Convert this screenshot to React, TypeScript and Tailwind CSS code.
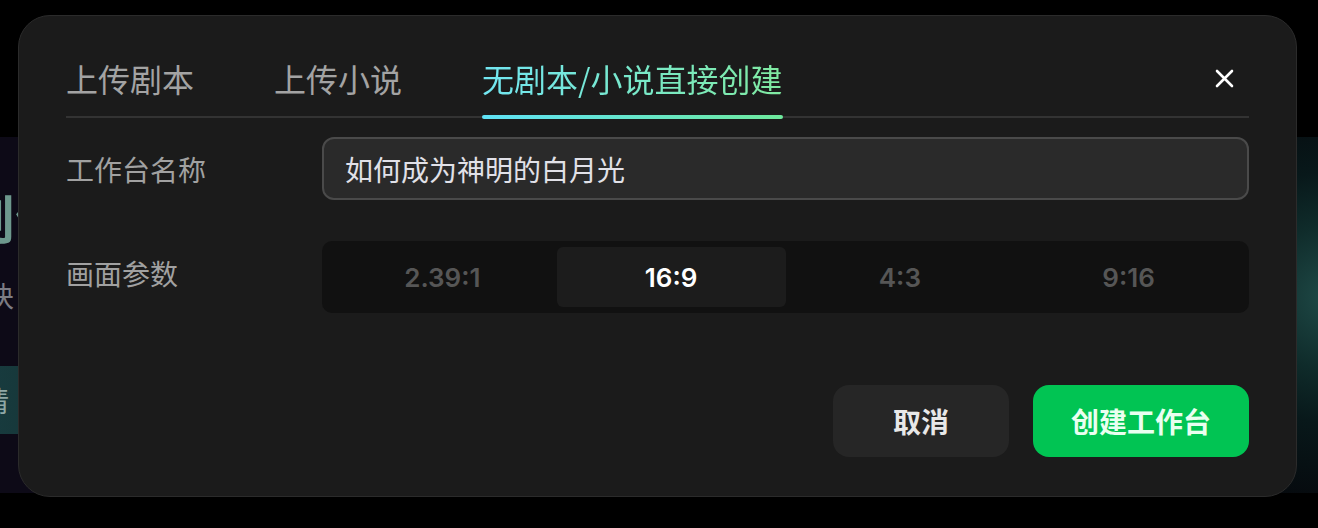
import { useState } from "react";

const tabs = ["上传剧本", "上传小说", "无剧本/小说直接创建"];
const ratios = ["2.39:1", "16:9", "4:3", "9:16"];

export default function App() {
  const [tab, setTab] = useState(2);
  const [ratio, setRatio] = useState(1);
  const [name, setName] = useState("如何成为神明的白月光");

  return (
    <div className="relative h-[528px] w-[1318px] overflow-hidden bg-black font-['Noto_Sans_CJK_SC','Noto_Sans',sans-serif]">
      {/* page behind the dialog */}
      <div className="mt-[137px] flex h-[356px] bg-[#0d0a17]">
        <div className="flex w-[120px] flex-col">
          <div className="-ml-[37px] mt-[50px] text-[52px] font-bold leading-[60px] text-[#6d988d]">创作</div>
          <div className="-ml-[14px] mt-[32px] text-[28px] leading-[32px] text-[#7c7c84]">块</div>
          <div className="-ml-[20px] mt-[55px] flex h-[68px] w-[140px] items-center bg-linear-to-r from-[#183c40] to-[#14302f] pl-[20px] text-[28px] text-[#8fa8a6]">
            <span className="-ml-[19px]">请</span>
          </div>
        </div>
        <div className="ml-auto w-[60px] bg-[radial-gradient(circle_at_120%_45%,#1f4a47_0%,#0f2b2a_35%,#08181a_60%,#06090d_100%)]" />
      </div>

      {/* dialog */}
      <div className="absolute left-[18px] top-[15px] h-[482px] w-[1279px] rounded-[32px] border border-[#2b2b2b] bg-[#1b1b1b] px-[47px]">
        <div className="flex items-start border-b-2 border-[#333333] pt-[42px]">
          <div className="flex gap-[80px]">
            {tabs.map((t, i) => (
              <button key={t} onClick={() => setTab(i)} className="flex flex-col items-stretch">
                <span
                  className={
                    i === tab
                      ? "bg-linear-to-r from-[#72e6f2] to-[#80eaa0] bg-clip-text text-[32px] leading-[40px] text-transparent"
                      : "text-[32px] leading-[40px] text-[#a3a3a3]"
                  }
                >
                  {t}
                </span>
                <span
                  className={
                    i === tab
                      ? "-mb-[3px] mt-[17px] h-[4px] rounded-full bg-linear-to-r from-[#5fe2f6] to-[#6ee99c]"
                      : "-mb-[3px] mt-[17px] h-[4px]"
                  }
                />
              </button>
            ))}
          </div>
          <button className="ml-auto mr-[9px] flex h-[40px] w-[32px] items-center justify-center">
            <svg width="19" height="19" viewBox="0 0 19 19" fill="none" stroke="#ffffff" strokeWidth="2.6" strokeLinecap="round">
              <path d="M2 2L17 17M17 2L2 17" />
            </svg>
          </button>
        </div>

        <div className="mt-[19px] flex items-center">
          <div className="w-[256px] text-[28px] leading-[36px] text-[#a1a1a1]">工作台名称</div>
          <input
            value={name}
            onChange={(e) => setName(e.target.value)}
            className="h-[63px] flex-1 rounded-[12px] border-2 border-[#4a4a4a] bg-[#2a2a2a] px-[21px] text-[28px] text-[#e1e1e8] outline-none"
          />
        </div>

        <div className="mt-[41px] flex items-center">
          <div className="mb-[8px] w-[256px] text-[28px] leading-[36px] text-[#a1a1a1]">画面参数</div>
          <div className="grid h-[72px] flex-1 grid-cols-4 rounded-[10px] bg-[#111111] p-[6px]">
            {ratios.map((r, i) => (
              <button
                key={r}
                onClick={() => setRatio(i)}
                className={
                  i === ratio
                    ? "rounded-[6px] bg-[#1c1c1c] font-['Inter',sans-serif] text-[26px] font-semibold text-white"
                    : "rounded-[6px] font-['Inter',sans-serif] text-[26px] font-semibold text-[#565656]"
                }
              >
                {r}
              </button>
            ))}
          </div>
        </div>

        <div className="mt-[72px] flex justify-end gap-[24px]">
          <button className="h-[72px] w-[176px] rounded-[16px] bg-[#262626] text-[28px] font-bold text-[#e8e8e8]">取消</button>
          <button className="h-[72px] w-[216px] rounded-[16px] bg-[#01c453] text-[28px] font-bold text-[#e9fff0]">创建工作台</button>
        </div>
      </div>
    </div>
  );
}
